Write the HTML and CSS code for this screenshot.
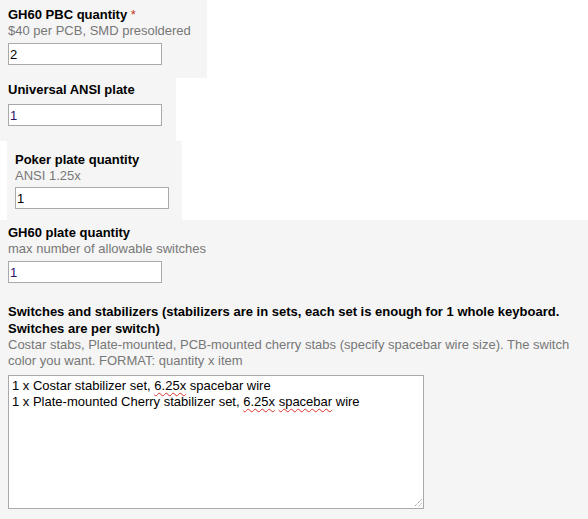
FILE: index.html
```html
<!DOCTYPE html>
<html lang="en">
	<head>
		<meta charset="utf-8">
		<title>GH60 order form</title>
		<link rel="stylesheet" href="styles.css">
	</head>
	<body>

<div class="item item-pcb">
	<label class="ss-q-title" for="q1">GH60 PBC quantity <span class="req">*</span></label>
	<div class="ss-q-help">$40 per PCB, SMD presoldered</div>
	<input id="q1" class="ss-q-short" type="text" value="2">
</div>

<div class="item item-ansi">
	<label class="ss-q-title" for="q2">Universal ANSI plate</label>
	<input id="q2" class="ss-q-short filled" type="text" value="1">
</div>

<div class="item item-poker">
	<label class="ss-q-title" for="q3">Poker plate quantity</label>
	<div class="ss-q-help">ANSI 1.25x</div>
	<input id="q3" class="ss-q-short" type="text" value="1">
</div>

<div class="item item-last">
	<label class="ss-q-title" for="q4">GH60 plate quantity</label>
	<div class="ss-q-help">max number of allowable switches</div>
	<input id="q4" class="ss-q-short filled" type="text" value="1">

	<label class="ss-q-title ss-q-long-title">Switches and stabilizers (stabilizers are in sets, each set is enough for 1 whole keyboard. Switches are per switch)</label>
	<div class="ss-q-help">Costar stabs, Plate-mounted, PCB-mounted cherry stabs (specify spacebar wire size). The switch color you want. FORMAT: quantity x item</div>
	<div class="ss-q-long" role="textbox" contenteditable="true">
		<div>1 x Costar stabilizer set, <span class="typo">6.25x</span> spacebar wire</div>
		<div>1 x Plate-mounted Cherry stabilizer set, <span class="typo">6.25x</span> <span class="typo">spacebar</span> wire</div>
		<svg class="grip" width="9" height="9" viewBox="0 0 9 9">
			<path d="M8.5 1.5 L1.5 8.5 M8.5 5.5 L5.5 8.5" stroke="#777" stroke-width="1" stroke-dasharray="1 1"/>
		</svg>
	</div>
</div>

	</body>
</html>
```
FILE: styles.css
```css
* { box-sizing: border-box; }

html, body {
	height: 100%;
}

body {
	margin: 0;
	background: white;
	color: black;
	font-family: "Liberation Sans", Arial, sans-serif;
	font-size: 13px;
}

.item {
	background: #f5f5f5;
	padding-left: 8px;
}

.item-pcb {
	width: 207px;
	height: 78px;
	padding-top: 6px;
}

.item-ansi {
	width: 176px;
	height: 63px;
	padding-top: 3px;
}

.item-ansi .ss-q-short {
	margin-top: 6px;
}

.item-poker {
	margin-left: 7px;
	width: 175px;
	height: 79px;
	padding-top: 10px;
}

.item-poker .ss-q-short {
	margin-top: 3px;
}

.item-last {
	min-height: calc(100% - 220px);
	padding-top: 4px;
	padding-right: 8px;
}

.ss-q-title {
	display: block;
	font-weight: bold;
	line-height: 17px;
}

.ss-q-long-title {
	margin-top: 20px;
}

.req {
	color: #c43b1d;
	font-weight: normal;
}

.ss-q-help {
	color: #777;
	line-height: 16px;
}

.ss-q-short {
	display: block;
	margin: 4px 0 0;
	width: 154px;
	height: 22px;
	padding: 0 1px;
	border: 1px solid #a9a9a9;
	background: white;
	color: black;
	font-family: "Liberation Sans", Arial, sans-serif;
	font-size: 13px;
	outline: none;
}

.ss-q-short.filled {
	color: #2b0f6b;
}

.ss-q-long {
	position: relative;
	margin-top: 6px;
	width: 416px;
	height: 134px;
	padding: 2px 3px;
	border: 1px solid #a9a9a9;
	background: white;
	line-height: 16px;
	outline: none;
}

.typo {
	text-decoration: underline wavy #e0322a;
	text-decoration-thickness: 1px;
	text-underline-offset: 2px;
	text-decoration-skip-ink: none;
}

.grip {
	position: absolute;
	right: 1px;
	bottom: 1px;
}
```
